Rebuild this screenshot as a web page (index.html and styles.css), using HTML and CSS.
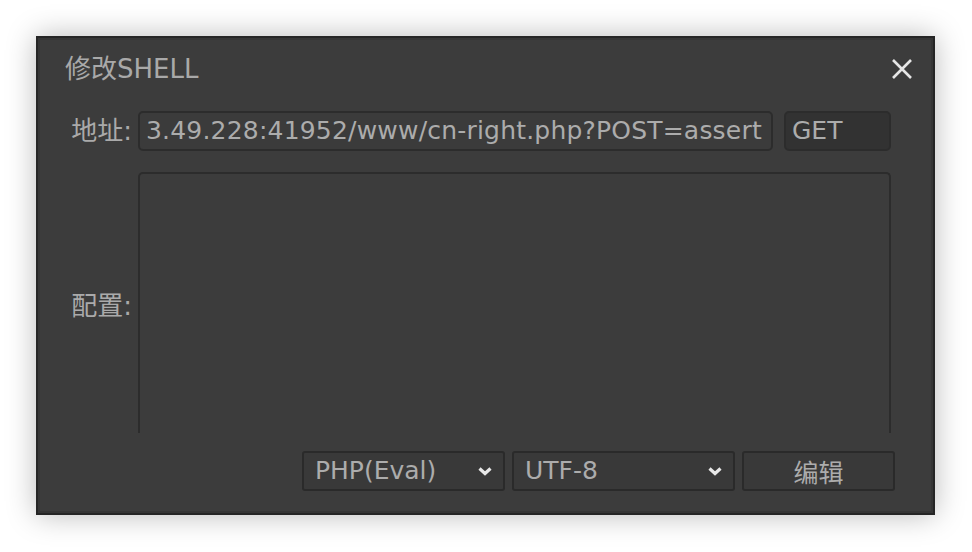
FILE: index.html
```html
<!DOCTYPE html>
<html lang="zh">
<head>
<meta charset="utf-8">
<title>修改SHELL</title>
<link rel="stylesheet" href="styles.css">
</head>
<body>
<div class="dialog">
  <div class="header">
    <div class="title">修改SHELL</div>
    <svg class="close" width="22" height="22" viewBox="0 0 22 22"><path d="M2 2 L20 20 M20 2 L2 20" stroke="#e6e6e6" stroke-width="2.6" fill="none"/></svg>
  </div>
  <div class="form">
    <div class="label">地址:</div>
    <div class="fieldrow">
      <div class="input url">3.49.228:41952/www/cn-right.php?POST=assert</div>
      <div class="input method">GET</div>
    </div>
    <div class="label cfg">配置:</div>
    <div class="textarea"></div>
  </div>
  <div class="footer">
    <div class="select s1"><span>PHP(Eval)</span><svg width="16" height="10" viewBox="0 0 16 10"><path d="M2.5 2.5 L8 7.5 L13.5 2.5" stroke="#e8e8e8" stroke-width="3.2" fill="none"/></svg></div>
    <div class="select s2"><span>UTF-8</span><svg width="16" height="10" viewBox="0 0 16 10"><path d="M2.5 2.5 L8 7.5 L13.5 2.5" stroke="#e8e8e8" stroke-width="3.2" fill="none"/></svg></div>
    <div class="button">编辑</div>
  </div>
</div>
</body>
</html>
```
FILE: styles.css
```css
html, body { margin: 0; padding: 0; }
body {
  background: #ffffff;
  width: 972px;
  height: 552px;
  padding: 36px 0 0 36px;
  box-sizing: border-box;
  font-family: "DejaVu Sans", "Noto Sans CJK SC", sans-serif;
  color: #aaaaaa;
}
.dialog {
  width: 899px;
  height: 479px;
  box-sizing: border-box;
  background: #3c3c3c;
  border: 2px solid #252525;
  box-shadow: inset 0 0 0 2px #353535, 0 0 28px rgba(0,0,0,0.28);
  display: flex;
  flex-direction: column;
}
.header {
  height: 73px;
  box-sizing: border-box;
  padding: 13px 20px 0 27px;
  display: flex;
  align-items: flex-start;
  justify-content: space-between;
}
.title {
  font-size: 26px;
  line-height: 36px;
  color: #a9a9a9;
}
.close { margin-top: 7px; }
.form {
  display: grid;
  grid-template-columns: 94px 753px;
  column-gap: 6px;
  row-gap: 21px;
  grid-template-rows: 40px 261px;
}
.label {
  text-align: right;
  font-size: 26px;
  line-height: 40px;
  color: #aaaaaa;
}
.label.cfg { align-self: center; margin-top: 6px; }
.fieldrow { display: flex; gap: 11px; }
.input {
  height: 40px;
  box-sizing: border-box;
  border: 2px solid #2c2c2c;
  border-radius: 5px;
  font-size: 25px;
  line-height: 36px;
  padding-left: 6px;
  white-space: nowrap;
  overflow: hidden;
  color: #acacac;
}
.url { width: 635px; background: #3b3b3b; letter-spacing: 0.2px; }
.method { width: 107px; background: #323232; }
.textarea {
  border: 2px solid #2c2c2c;
  border-bottom: none;
  border-radius: 5px 5px 0 0;
  background: #3c3c3c;
}
.footer {
  margin-top: 18px;
  display: flex;
  justify-content: flex-end;
  gap: 7px;
  padding-right: 38px;
}
.select, .button {
  height: 40px;
  box-sizing: border-box;
  border: 2px solid #2a2a2a;
  border-radius: 3px;
  background: #393939;
  font-size: 25px;
  line-height: 36px;
  color: #acacac;
}
.select {
  display: flex;
  align-items: center;
  justify-content: space-between;
  padding: 0 10px 0 11px;
}
.s1 { width: 203px; }
.s2 { width: 223px; }
.button { width: 153px; text-align: center; font-family: "Noto Sans CJK SC", sans-serif; }
```
